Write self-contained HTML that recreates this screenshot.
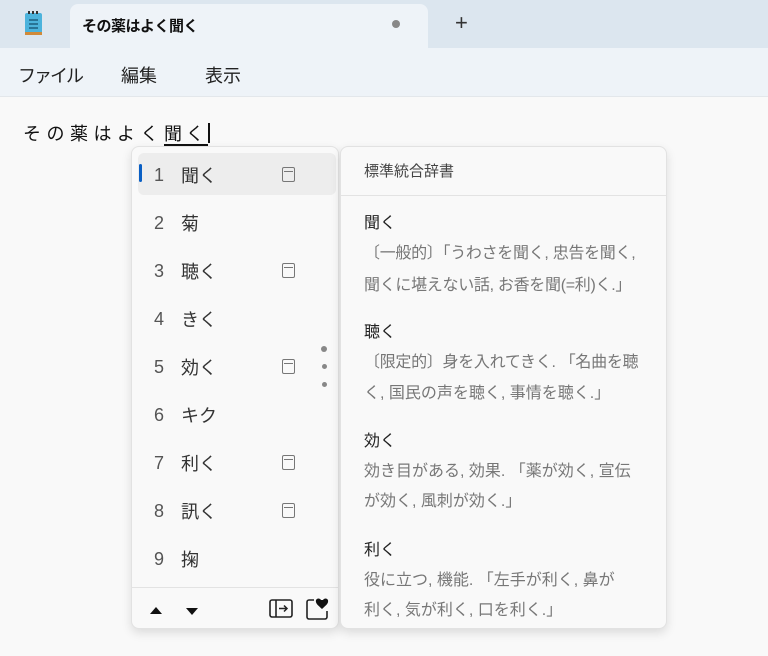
<!DOCTYPE html>
<html><head><meta charset="utf-8"><style>
*{margin:0;padding:0;box-sizing:border-box}
body{width:768px;height:656px;overflow:hidden;background:#f9f9f9;font-family:"Liberation Sans","Noto Sans CJK JP",sans-serif;position:relative;color:#1a1a1a}
.abs{position:absolute}
.tabbar{left:0;top:0;width:768px;height:48px;background:#dce6ef}
.tab{left:70px;top:4px;width:358px;height:48px;background:#eef3f8;border-radius:8px 8px 0 0}
.menu{left:0;top:48px;width:768px;height:49px;background:#eef3f8;border-bottom:1px solid #e3e7eb}
.menu span{position:absolute;top:14px;font-size:18px;color:#222}
.cand{left:131px;top:146px;width:208px;height:483px;background:#f9f9f9;border:1px solid #e2e2e2;border-radius:8px;box-shadow:0 4px 10px rgba(0,0,0,.12)}
.dict{left:340px;top:146px;width:327px;height:483px;background:#f9f9f9;border:1px solid #e2e2e2;border-radius:8px;box-shadow:0 4px 10px rgba(0,0,0,.12)}
.row{position:absolute;left:0;width:206px;height:48px;font-size:18px}
.row .n{position:absolute;left:22px;top:15px;color:#555}
.row .w{position:absolute;left:49px;top:12px;color:#333}
.ic{position:absolute;left:150px;top:17px;width:13px;height:15px;border:1.5px solid #777;border-radius:2px}
.ic:after{content:"";position:absolute;left:1px;right:1px;top:3px;border-top:1.5px solid #777}
.dot{position:absolute;left:190px;width:5px;height:5px;border-radius:50%;background:#888}
.d{position:absolute;left:23px;font-size:16px;color:#777;white-space:nowrap}
.h{position:absolute;left:23px;font-size:16px;color:#222}
</style></head><body>
<div class="abs tabbar"></div>
<div class="abs tab"></div>
<svg class="abs" style="left:24px;top:10px" width="20" height="28" viewBox="0 0 20 28"><rect x="1" y="3" width="17" height="22" rx="2" fill="#4cb3dc"/><rect x="1" y="22" width="17" height="3" fill="#d08a3a"/><g stroke="#1d5f80" stroke-width="1.5"><line x1="5" y1="10" x2="14" y2="10"/><line x1="5" y1="14" x2="14" y2="14"/><line x1="5" y1="18" x2="14" y2="18"/></g><g fill="#333"><rect x="4" y="1" width="2" height="3"/><rect x="8" y="1" width="2" height="3"/><rect x="12" y="1" width="2" height="3"/></g></svg>
<div class="abs" style="left:82px;top:15px;font-size:15px;font-weight:bold;color:#111;letter-spacing:-0.5px">その薬はよく聞く</div>
<div class="abs" style="left:392px;top:20px;width:8px;height:8px;border-radius:50%;background:#888"></div>
<div class="abs" style="left:455px;top:10px;font-size:22px;color:#333">+</div>
<div class="abs menu"><span style="left:18px;letter-spacing:-2px">ファイル</span><span style="left:121px">編集</span><span style="left:205px">表示</span></div>
<div class="abs" style="left:23px;top:120px;font-size:18px;color:#111;letter-spacing:5.5px">その薬はよく<span style="border-bottom:2px solid #111;letter-spacing:4px">聞く</span><span style="display:inline-block;width:2px;height:20px;background:#111;vertical-align:-3px"></span></div>
<div class="abs cand">
<div style="position:absolute;left:6px;top:6px;width:198px;height:42px;background:#ededed;border-radius:6px"></div>
<div style="position:absolute;left:7px;top:17px;width:3px;height:18px;background:#0a5fc4;border-radius:2px"></div>
<div class="row" style="top:3px"><span class="n">1</span><span class="w">聞く</span><i class="ic"></i></div>
<div class="row" style="top:51px"><span class="n">2</span><span class="w">菊</span></div>
<div class="row" style="top:99px"><span class="n">3</span><span class="w">聴く</span><i class="ic"></i></div>
<div class="row" style="top:147px"><span class="n">4</span><span class="w">きく</span></div>
<div class="row" style="top:195px"><span class="n">5</span><span class="w">効く</span><i class="ic"></i></div>
<div class="row" style="top:243px"><span class="n">6</span><span class="w">キク</span></div>
<div class="row" style="top:291px"><span class="n">7</span><span class="w">利く</span><i class="ic"></i></div>
<div class="row" style="top:339px"><span class="n">8</span><span class="w">訊く</span><i class="ic"></i></div>
<div class="row" style="top:387px"><span class="n">9</span><span class="w">掬</span></div>
<div class="dot" style="top:199px;width:6px;height:6px;left:189px"></div>
<div class="dot" style="top:217px"></div>
<div class="dot" style="top:235px"></div>
<div style="position:absolute;left:0;right:0;top:440px;border-top:1px solid #e3e3e3"></div>
<svg style="position:absolute;left:16px;top:455px" width="64" height="14"><polygon points="2,12 8,5 14,12" fill="#111"/><polygon points="38,6 50,6 44,13" fill="#111"/></svg>
<svg style="position:absolute;left:136px;top:450px" width="66" height="26"><rect x="2" y="3" width="22" height="17" rx="2" fill="none" stroke="#222" stroke-width="1.6"/><line x1="8" y1="3" x2="8" y2="20" stroke="#222" stroke-width="1.6"/><path d="M11 11.5h8M16 8.5l3 3-3 3" fill="none" stroke="#222" stroke-width="1.5"/><path d="M46 3h-5a2 2 0 0 0-2 2v15a2 2 0 0 0 2 2h16a2 2 0 0 0 2-2v-6" fill="none" stroke="#222" stroke-width="1.6"/><path d="M53 3c-2-3-6-1-5 2 0 2 4 5 6 7 2-2 6-5 6-7 1-3-3-5-5-2z" fill="#111"/></svg>
</div>
<div class="abs dict">
<div class="h" style="top:13px;font-size:15px;color:#444">標準統合辞書</div>
<div style="position:absolute;left:0;right:0;top:48px;border-top:1px solid #e3e3e3"></div>
<div class="h" style="top:62px">聞く</div>
<div class="d" style="top:92px;letter-spacing:-0.3px">〔一般的〕「うわさを聞く, 忠告を聞く,</div>
<div class="d" style="top:124px;letter-spacing:-0.3px">聞くに堪えない話, お香を聞(=利)く.」</div>
<div class="h" style="top:171px">聴く</div>
<div class="d" style="top:201px;letter-spacing:-0.3px">〔限定的〕身を入れてきく. 「名曲を聴</div>
<div class="d" style="top:232px">く, 国民の声を聴く, 事情を聴く.」</div>
<div class="h" style="top:280px">効く</div>
<div class="d" style="top:310px">効き目がある, 効果. 「薬が効く, 宣伝</div>
<div class="d" style="top:340px">が効く, 風刺が効く.」</div>
<div class="h" style="top:389px">利く</div>
<div class="d" style="top:419px">役に立つ, 機能. 「左手が利く, 鼻が</div>
<div class="d" style="top:449px">利く, 気が利く, 口を利く.」</div>
</div>
</body></html>
